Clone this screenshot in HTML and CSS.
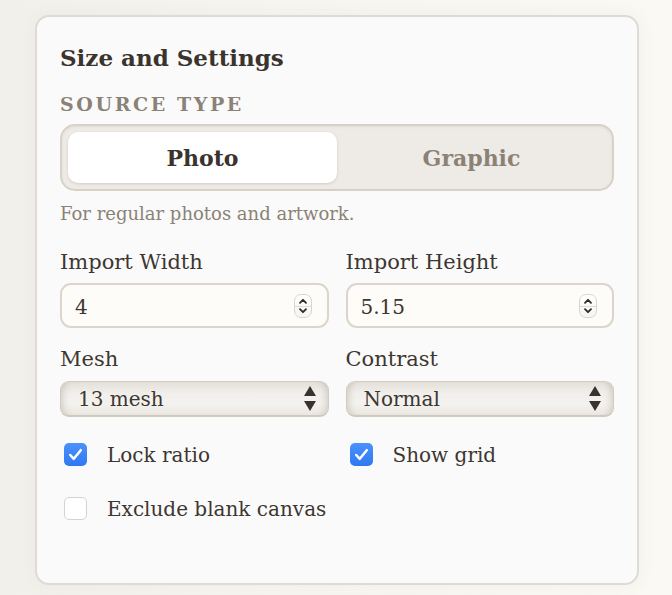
FILE: index.html
```html
<!DOCTYPE html>
<html lang="en">
<head>
<meta charset="utf-8">
<title>Size and Settings</title>
<link rel="stylesheet" href="styles.css">
</head>
<body>
<section class="card">
  <h2 class="title">Size and Settings</h2>
  <div class="eyebrow">SOURCE TYPE</div>
  <div class="segmented">
    <button class="seg seg-active">Photo</button>
    <button class="seg">Graphic</button>
  </div>
  <p class="hint">For regular photos and artwork.</p>

  <div class="fields">
    <div class="field">
      <label class="label">Import Width</label>
      <div class="input">
        <span class="value">4</span>
        <span class="spinner">
          <svg viewBox="0 0 18 24" width="18" height="24"><path d="M6 8.8 L9 5.8 L12 8.8" fill="none" stroke="#2f2a26" stroke-width="1.8" stroke-linecap="round" stroke-linejoin="round"/><path d="M6 15.2 L9 18.2 L12 15.2" fill="none" stroke="#2f2a26" stroke-width="1.8" stroke-linecap="round" stroke-linejoin="round"/></svg>
        </span>
      </div>
    </div>
    <div class="field">
      <label class="label">Import Height</label>
      <div class="input">
        <span class="value">5.15</span>
        <span class="spinner">
          <svg viewBox="0 0 18 24" width="18" height="24"><path d="M6 8.8 L9 5.8 L12 8.8" fill="none" stroke="#2f2a26" stroke-width="1.8" stroke-linecap="round" stroke-linejoin="round"/><path d="M6 15.2 L9 18.2 L12 15.2" fill="none" stroke="#2f2a26" stroke-width="1.8" stroke-linecap="round" stroke-linejoin="round"/></svg>
        </span>
      </div>
    </div>
    <div class="field">
      <label class="label">Mesh</label>
      <div class="select">
        <span class="value">13 mesh</span>
        <svg class="arrows" viewBox="0 0 12 25" width="12" height="25"><path d="M6 0 L12 10 L0 10 Z" fill="#3a332d"/><path d="M0 15 L12 15 L6 25 Z" fill="#3a332d"/></svg>
      </div>
    </div>
    <div class="field">
      <label class="label">Contrast</label>
      <div class="select">
        <span class="value">Normal</span>
        <svg class="arrows" viewBox="0 0 12 25" width="12" height="25"><path d="M6 0 L12 10 L0 10 Z" fill="#3a332d"/><path d="M0 15 L12 15 L6 25 Z" fill="#3a332d"/></svg>
      </div>
    </div>
  </div>

  <div class="checks">
    <label class="check">
      <span class="box box-on"><svg viewBox="0 0 24 24" width="23" height="23"><path d="M6.5 12.5 L10.2 16.5 L17.5 7.5" fill="none" stroke="#fff" stroke-width="2.6" stroke-linecap="round" stroke-linejoin="round"/></svg></span>
      <span class="check-text">Lock ratio</span>
    </label>
    <label class="check">
      <span class="box box-on"><svg viewBox="0 0 24 24" width="23" height="23"><path d="M6.5 12.5 L10.2 16.5 L17.5 7.5" fill="none" stroke="#fff" stroke-width="2.6" stroke-linecap="round" stroke-linejoin="round"/></svg></span>
      <span class="check-text">Show grid</span>
    </label>
    <label class="check">
      <span class="box"></span>
      <span class="check-text">Exclude blank canvas</span>
    </label>
  </div>
</section>
</body>
</html>
```

FILE: styles.css
```css
* { box-sizing: border-box; }

html, body {
  margin: 0;
  padding: 0;
}

body {
  width: 672px;
  height: 595px;
  overflow: hidden;
  background: linear-gradient(to right, #f2f0eb 0%, #f7f5f0 40%, #fbf9f4 100%);
  font-family: "DejaVu Serif", "Liberation Serif", serif;
  color: #3d3631;
}

.card {
  margin: 15px 0 0 35px;
  width: 604px;
  height: 570px;
  border: 2px solid #dedbd6;
  border-radius: 14px;
  background: #fafafa;
  padding: 26px 23px 0 23px;
  box-shadow: 0 0 18px rgba(120, 110, 90, 0.06);
}

.title {
  margin: 0;
  font-size: 23px;
  line-height: 30px;
  font-weight: bold;
  color: #3a332e;
}

.eyebrow {
  margin-top: 19px;
  font-size: 19px;
  line-height: 24px;
  font-weight: bold;
  letter-spacing: 2.6px;
  color: #8a8277;
}

.segmented {
  margin-top: 8px;
  height: 67px;
  border: 2px solid #d8d1c7;
  border-radius: 15px;
  background: #eeebe6;
  padding: 6px;
  display: grid;
  grid-template-columns: 1fr 1fr;
  box-shadow: inset 0 1px 3px rgba(0, 0, 0, 0.06);
}

.seg {
  border: none;
  background: transparent;
  font-family: inherit;
  font-size: 22px;
  font-weight: bold;
  color: #8a8277;
  padding: 0;
  border-radius: 10px;
}

.seg-active {
  background: #fff;
  color: #3a332e;
  box-shadow: 0 1px 3px rgba(80, 70, 50, 0.18);
}

.hint {
  margin: 11px 0 0;
  font-size: 18px;
  line-height: 24px;
  color: #8a8277;
}

.fields {
  margin-top: 22px;
  display: grid;
  grid-template-columns: 1fr 1fr;
  column-gap: 17px;
  row-gap: 17px;
}

.field {
  display: flex;
  flex-direction: column;
}

.label {
  font-size: 21px;
  line-height: 28px;
  color: #3d3631;
}

.input {
  margin-top: 7px;
  height: 45px;
  border: 2px solid #ddd5cb;
  border-radius: 11px;
  background: #fefcf8;
  display: flex;
  align-items: center;
  justify-content: space-between;
  padding: 2px 15px 0 13px;
  font-size: 20px;
}

.spinner {
  width: 18px;
  height: 24px;
  margin-top: -2px;
  border: 1px solid #d9d6d2;
  border-radius: 7px;
  background: linear-gradient(#ffffff, #f6f5f3);
  display: flex;
  position: relative;
}

.spinner::after {
  content: "";
  position: absolute;
  left: 0;
  right: 0;
  top: 11px;
  height: 1px;
  background: #dedbd7;
}

.spinner svg {
  position: relative;
  z-index: 1;
  margin: -1px;
}

.select {
  margin-top: 8px;
  height: 36px;
  border: 1px solid #d3cbc0;
  border-bottom: 2px solid #d1c9bd;
  border-radius: 9px;
  background: linear-gradient(to bottom, #e4e0da 0%, #f1efeb 35%, #f4f2ee 65%, #ebe8e3 100%);
  box-shadow: inset 8px 0 7px -6px rgba(90, 80, 60, 0.22), inset -8px 0 7px -6px rgba(90, 80, 60, 0.22);
  display: flex;
  align-items: center;
  justify-content: space-between;
  padding: 0 12px 0 17px;
  font-size: 20px;
}

.select .value { padding-top: 1px; }

.checks {
  margin-top: 23px;
  display: grid;
  grid-template-columns: 1fr 1fr;
  column-gap: 17px;
  row-gap: 26px;
}

.check {
  display: flex;
  align-items: center;
  gap: 20px;
  padding-left: 4px;
  height: 28px;
  font-size: 20px;
}

.box {
  width: 23px;
  height: 23px;
  border-radius: 5px;
  border: 1px solid #d6d3cf;
  background: #fff;
  flex: none;
  display: flex;
}

.box-on {
  border: none;
  background: linear-gradient(#4b92fb, #2f78f2);
}

.check-text {
  padding-top: 2px;
}
```
